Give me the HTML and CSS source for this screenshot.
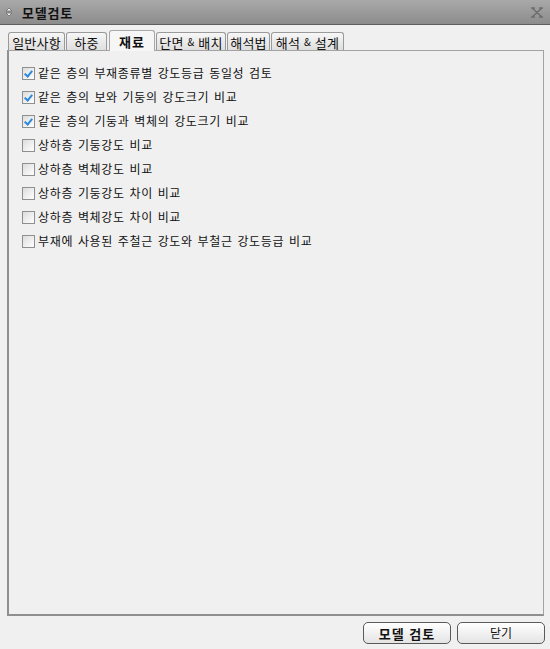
FILE: index.html
```html
<!DOCTYPE html>
<html lang="ko">
<head>
<meta charset="utf-8">
<title>모델검토</title>
<link rel="stylesheet" href="styles.css">
</head>
<body>
<div class="window">
  <div class="titlebar">
    <span class="grip">
      <svg width="8" height="10" viewBox="0 0 8 10"><path d="M4 1 L7 4 H1 Z M4 9 L7 6 H1 Z" fill="#f2f2f2" stroke="#6a6a6a" stroke-width="0.8"/></svg>
    </span>
    <span class="title">모델검토</span>
    <span class="close">
      <svg width="12" height="11" viewBox="0 0 12 11"><path d="M1 1 L11 10 M11 1 L1 10 M0 1 H4 M8 1 H12 M0 10 H4 M8 10 H12" stroke="#6e6e6e" stroke-width="1.5" fill="none"/></svg>
    </span>
  </div>
  <div class="tabs">
    <div class="tab t1">일반사항</div>
    <div class="tab t2">하중</div>
    <div class="tab active t3">재료</div>
    <div class="tab t4">단면 <span class="amp">&amp;</span> 배치</div>
    <div class="tab t5">해석법</div>
    <div class="tab t6">해석 <span class="amp">&amp;</span> 설계</div>
  </div>
  <div class="panel">
    <label class="row"><span class="box checked"></span><span class="lbl">같은 층의 부재종류별 강도등급 동일성 검토</span></label>
    <label class="row"><span class="box checked"></span><span class="lbl">같은 층의 보와 기둥의 강도크기 비교</span></label>
    <label class="row"><span class="box checked"></span><span class="lbl">같은 층의 기둥과 벽체의 강도크기 비교</span></label>
    <label class="row"><span class="box"></span><span class="lbl">상하층 기둥강도 비교</span></label>
    <label class="row"><span class="box"></span><span class="lbl">상하층 벽체강도 비교</span></label>
    <label class="row"><span class="box"></span><span class="lbl">상하층 기둥강도 차이 비교</span></label>
    <label class="row"><span class="box"></span><span class="lbl">상하층 벽체강도 차이 비교</span></label>
    <label class="row"><span class="box"></span><span class="lbl">부재에 사용된 주철근 강도와 부철근 강도등급 비교</span></label>
  </div>
  <div class="buttons">
    <button class="btn primary">모델 검토</button>
    <button class="btn">닫기</button>
  </div>
</div>
</body>
</html>
```

FILE: styles.css
```css
* { box-sizing: border-box; }
html, body { margin: 0; padding: 0; }
body {
  width: 550px;
  height: 649px;
  background: #f0f0f0;
  font-family: "Noto Sans CJK KR", "Noto Sans", sans-serif;
  font-size: 12px;
  color: #000;
  overflow: hidden;
}
.window {
  display: flex;
  flex-direction: column;
  height: 649px;
}
.titlebar {
  height: 25px;
  flex: none;
  display: flex;
  align-items: center;
  background: linear-gradient(#a9a9a9, #8c8c8c);
  border-bottom: 1px solid #5e5e5e;
  padding: 0 0 0 5px;
}
.grip { display: flex; width: 8px; height: 10px; margin-right: 9px; }
.title {
  font-weight: bold;
  font-size: 13px;
  color: #111;
  letter-spacing: 0.8px;
  line-height: 1;
}
.close {
  margin-left: auto;
  margin-right: 7px;
  display: flex;
}
.tabs {
  height: 25px;
  flex: none;
  display: flex;
  align-items: flex-end;
  padding-left: 8px;
  position: relative;
  z-index: 1;
}
.tab {
  height: 18px;
  margin-right: 1px;
  border: 1px solid #9a9a9a;
  border-bottom: none;
  border-radius: 3px 3px 0 0;
  background: linear-gradient(#f7f7f7, #dedede);
  display: flex;
  align-items: center;
  justify-content: center;
  font-size: 13px;
  line-height: 1;
  color: #111;
  letter-spacing: 0.2px;
  padding-top: 1px;
  white-space: pre;
}
.amp { font-size: 10px; }
.tab.active {
  height: 21px;
  margin-bottom: -1px;
  background: #f6f6f6;
  font-weight: bold;
  font-size: 13px;
  border-color: #a8a8a8;
  padding-top: 0;
  letter-spacing: 1px;
}
.t1 { width: 57px; }
.t2 { width: 41px; }
.t3 { width: 46px; margin-left: 1px; }
.t4 { width: 70px; }
.t5 { width: 43px; }
.t6 { width: 73px; }
.panel {
  flex: none;
  height: 566px;
  margin: 0 6px 0 7px;
  border-style: solid;
  border-width: 1px 1px 2px 2px;
  border-color: #a3a3a3 #a3a3a3 #8f8f8f #8f8f8f;
  padding: 10px 0 0 13px;
  display: flex;
  flex-direction: column;
}
.row {
  height: 24px;
  display: flex;
  align-items: center;
}
.box {
  width: 13px;
  height: 13px;
  border: 1px solid #8e8f8f;
  background: linear-gradient(135deg, #dcdcdc, #ffffff);
  margin-right: 3px;
  position: relative;
  flex: none;
}
.box.checked::after {
  content: "";
  position: absolute;
  left: 3px;
  top: 1px;
  width: 3px;
  height: 6px;
  border: solid #2a8ad8;
  border-width: 0 2px 2px 0;
  transform: rotate(40deg);
}
.lbl {
  letter-spacing: 0.65px;
  word-spacing: 0.8px;
  line-height: 1;
  color: #111;
}
.buttons {
  flex: none;
  display: flex;
  justify-content: flex-end;
  gap: 6px;
  padding: 6px 5px 0 0;
}
.btn {
  width: 88px;
  height: 22px;
  border: 1px solid #5a5a5a;
  border-radius: 5px;
  background: linear-gradient(#ffffff, #e4e4e4);
  font-family: "Noto Sans CJK KR", "Noto Sans", sans-serif;
  font-size: 12px;
  color: #111;
  padding: 0;
  line-height: 1;
}
.btn.primary {
  font-weight: bold;
  font-size: 13px;
  letter-spacing: 1px;
}
```
